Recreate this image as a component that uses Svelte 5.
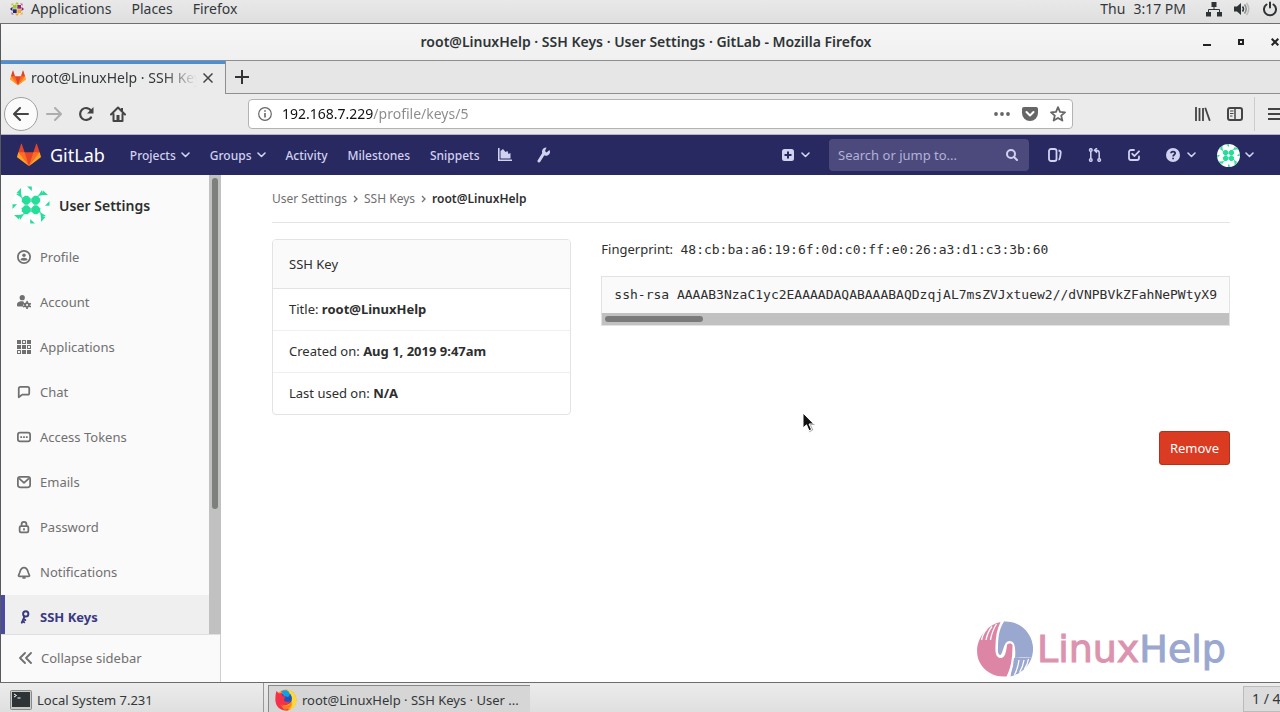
<script>
  const sideItems = [
    { label: 'Profile', icon: 'profile' },
    { label: 'Account', icon: 'account' },
    { label: 'Applications', icon: 'apps' },
    { label: 'Chat', icon: 'chat' },
    { label: 'Access Tokens', icon: 'token' },
    { label: 'Emails', icon: 'mail' },
    { label: 'Password', icon: 'lock' },
    { label: 'Notifications', icon: 'bell' },
    { label: 'SSH Keys', icon: 'key', active: true }
  ];
  const details = [
    ['Title:', 'root@LinuxHelp'],
    ['Created on:', 'Aug 1, 2019 9:47am'],
    ['Last used on:', 'N/A']
  ];
  const publicKey =
    'ssh-rsa AAAAB3NzaC1yc2EAAAADAQABAAABAQDzqjAL7msZVJxtuew2//dVNPBVkZFahNePWtyX9';
  let url = $state('192.168.7.229/profile/keys/5');
  let query = $state('');
</script>

{#snippet tanuki(size)}
  <svg width={size} height={size} viewBox="0 0 36 36" aria-hidden="true">
    <path fill="#e24329" d="M2 14l9.38 9v-9l-4-12.28c-.205-.632-1.176-.632-1.38 0z" />
    <path fill="#e24329" d="M34 14l-9.38 9v-9l4-12.28c.205-.632 1.176-.632 1.38 0z" />
    <path fill="#e24329" d="M18 34.38 3 14h30z" />
    <path fill="#fc6d26" d="M18 34.38 11.38 14H2l4 11z" />
    <path fill="#fc6d26" d="M18 34.38 24.62 14H34l-4 11z" />
    <path fill="#fca326" d="M2 14L.1 20.16c-.18.565 0 1.2.5 1.56L18 34.38z" />
    <path fill="#fca326" d="M34 14l1.9 6.16c.18.565 0 1.2-.5 1.56L18 34.38z" />
  </svg>
{/snippet}

{#snippet chevron()}
  <svg width="9" height="6" viewBox="0 0 9 6" aria-hidden="true">
    <path d="M1 1l3.500 3.500L8 1" fill="none" stroke="currentColor" stroke-width="1.600" stroke-linecap="round" stroke-linejoin="round" />
  </svg>
{/snippet}

{#snippet identicon(size)}
  <svg width={size} height={size} viewBox="0 0 38 38" aria-hidden="true">
    <circle cx="19" cy="19" r="19" fill="#fff" />
    {#each [0, 90, 180, 270] as turn}
      <g fill="#27dd9c" transform="rotate({turn} 19 19)">
        <path d="M12.800 9.800h3l3 3v3l-3 3h-3l-3-3v-3z" />
        <path d="M15 .5h4.800v4.500z" />
        <path d="M26 10l4-6 1.500 5z" />
        <path d="M31 4.500l5 4.500h-5z" />
        <path d="M26.500 8.500v4l-3.500 1z" />
      </g>
    {/each}
  </svg>
{/snippet}

{#snippet sideIcon(name)}
  <svg width="14" height="14" viewBox="0 0 16 16" fill="none" stroke="currentColor" stroke-width="2" stroke-linejoin="round" stroke-linecap="round" aria-hidden="true">
    {#if name === 'profile'}
      <circle cx="8" cy="8" r="7" />
      <circle cx="8" cy="6" r="2" fill="currentColor" stroke="none" />
      <path d="M4 11.500c0-3.500 8-3.500 8 0-1 1-7 1-8 0z" fill="currentColor" stroke="none" />
    {:else if name === 'account'}
      <g fill="currentColor" stroke="none">
        <circle cx="6" cy="3" r="3" />
        <path d="M1 13c-1 0-1-1-1-2 0-3 3-4 5-4 1.500 0 2.500.3 3.300 1-1.500 1.500-1.700 3-1 5z" />
      </g>
      <circle cx="11.500" cy="11.500" r="2.200" />
      <path d="M11.500 7.600v.8M11.500 14.600v.8M7.800 10l.8.400M14.400 12.800l.8.400M7.800 13.200l.8-.4M14.400 10.400l.8-.4" />
    {:else if name === 'apps'}
      <g fill="currentColor" stroke="none">
        <path d="M0 0h4.600v4.600H0zM11.400 0H16v4.600h-4.600zM0 5.700h4.600v4.600H0zM5.700 5.700h4.600v4.600H5.700zM5.700 11.400h4.600V16H5.700zM11.400 11.400H16V16h-4.600z" />
      </g>
      <path d="M6.300.600h3.400v3.400H6.300zM12 6.300h3.400v3.400H12zM.600 12H4v3.400H.600z" stroke-width="1.200" />
    {:else if name === 'chat'}
      <path d="M4 2h8a2 2 0 0 1 2 2v5a2 2 0 0 1-2 2H6l-4 3V4a2 2 0 0 1 2-2z" />
    {:else if name === 'token'}
      <rect x="1" y="3" width="14" height="10" rx="2.500" />
      <path d="M3.800 7h2v2h-2zM7 7h2v2H7zM10.200 7h2v2h-2z" fill="currentColor" stroke="none" />
    {:else if name === 'mail'}
      <rect x="1" y="2" width="14" height="12" rx="2.500" />
      <path d="M3 4.500l5 4.500 5-4.500" />
    {:else if name === 'lock'}
      <rect x="3" y="7" width="10" height="7" rx="1.500" />
      <path d="M5.200 7V5a2.800 2.800 0 0 1 5.600 0v2M8 10v1" />
    {:else if name === 'bell'}
      <path d="M3 13c-1.300 0-1.500-1-.9-2C4 8.500 3 3 8 3s4 5.500 5.900 8c.6 1 .4 2-.9 2z" />
      <path d="M7 14.800h2" />
    {:else if name === 'key'}
      <circle cx="10" cy="4.500" r="3" stroke-width="2.200" />
      <path d="M8.500 7.500L5.500 14.500M7.500 10.500l2 1M6.300 13l2 1" stroke-width="2.200" />
    {/if}
  </svg>
{/snippet}

<div class="desktop">
  <header class="panel">
    <svg class="centos" width="14" height="14" viewBox="0 0 14 14" aria-hidden="true">
      <path d="M3 3h4v4H3z" fill="#9ccd2a" />
      <path d="M7 3h4v4H7z" fill="#932279" />
      <path d="M3 7h4v4H3z" fill="#262577" />
      <path d="M7 7h4v4H7z" fill="#efa724" />
      <path d="M7 0l2.200 2.500H4.800z" fill="#9ccd2a" />
      <path d="M14 7l-2.500 2.200V4.800z" fill="#932279" />
      <path d="M7 14l-2.200-2.500h4.400z" fill="#efa724" />
      <path d="M0 7l2.500-2.200v4.400z" fill="#262577" />
      <path d="M1.500 1.500H4L1.500 4zM12.500 12.500H10l2.500-2.500z" fill="#efa724" />
      <path d="M12.500 1.500V4L10 1.500zM1.500 12.500V10L4 12.500z" fill="#b45ba0" />
      <path d="M7 2.500v9M2.500 7h9" stroke="#eee" stroke-width=".6" />
    </svg>
    <nav class="menus">
      <button>Applications</button>
      <button>Places</button>
      <button>Firefox</button>
    </nav>
    <div class="tray">
      <time><span>Thu</span><span>3:17 PM</span></time>
      <svg width="16" height="16" viewBox="0 0 16 16" fill="#2e3436" aria-hidden="true">
        <path d="M5.500 1h5v5h-5zM0 11h5v4.500H0zM11 11h5v4.500h-5z" />
        <path d="M8 5v3.500M2.500 11V8.500h11V11" fill="none" stroke="#2e3436" />
      </svg>
      <svg width="16" height="16" viewBox="0 0 16 16" aria-hidden="true">
        <path d="M0 5.500h3L7 2v12l-4-3.500H0z" fill="#2e3436" />
        <path d="M8.500 5.500q2 2.500 0 5" fill="none" stroke="#2e3436" stroke-width="1.500" />
        <path d="M10.500 3.500q3.500 4.500 0 9" fill="none" stroke="#888" stroke-width="1.500" />
        <path d="M12.500 2q4.500 6 0 12" fill="none" stroke="#bbb" stroke-width="1.500" />
      </svg>
      <svg width="16" height="16" viewBox="0 0 16 16" fill="none" stroke="#2e3436" stroke-width="2" stroke-linecap="round" aria-hidden="true">
        <path d="M4.500 3.500a6 6 0 1 0 7 0M8 1.500v5" />
      </svg>
    </div>
  </header>

  <section class="window">
    <div class="titlebar">
      <h1>root@LinuxHelp · SSH Keys · User Settings · GitLab - Mozilla Firefox</h1>
      <div class="controls">
        <button aria-label="Minimize"><svg width="8" height="8" viewBox="0 0 8 8"><path d="M0 6h8v2H0z" fill="#222" /></svg></button>
        <button aria-label="Maximize"><svg width="8" height="8" viewBox="0 0 8 8"><path d="M2 2h4v4H2z" fill="none" stroke="#222" stroke-width="2" /></svg></button>
        <button aria-label="Close"><svg width="8" height="8" viewBox="0 0 8 8"><path d="M.7.7l6.600 6.600M7.300.7L.7 7.300" stroke="#222" stroke-width="2" /></svg></button>
      </div>
    </div>

    <div class="tabs">
      <div class="tab">
        {@render tanuki(16)}
        <span class="tab-title">root@LinuxHelp · SSH Keys</span>
        <button aria-label="Close tab"><svg width="10" height="10" viewBox="0 0 10 10"><path d="M.5.5l9 9M9.500.5l-9 9" stroke="#444" stroke-width="1.500" /></svg></button>
      </div>
      <div class="tab-rest">
        <button aria-label="New tab"><svg width="14" height="14" viewBox="0 0 14 14"><path d="M7 0v14M0 7h14" stroke="#333" stroke-width="2" /></svg></button>
      </div>
    </div>

    <div class="toolbar">
      <button class="back" aria-label="Back"><svg width="16" height="14" viewBox="0 0 16 14"><path d="M15 7H1.500M7 1L1 7l6 6" fill="none" stroke="#444" stroke-width="2" stroke-linecap="round" stroke-linejoin="round" /></svg></button>
      <button aria-label="Forward"><svg width="16" height="14" viewBox="0 0 16 14"><path d="M1 7h13.500M9 1l6 6-6 6" fill="none" stroke="#adadad" stroke-width="2" stroke-linecap="round" stroke-linejoin="round" /></svg></button>
      <button aria-label="Reload"><svg width="16" height="16" viewBox="0 0 16 16"><path d="M13 11.500A6 6 0 1 1 13 4.500" fill="none" stroke="#444" stroke-width="2.200" stroke-linecap="round" /><path d="M15.500 1v6.500H9z" fill="#444" /></svg></button>
      <button aria-label="Home"><svg width="16" height="16" viewBox="0 0 16 16"><path d="M1 8.500L8 1.500l7 7M3.500 8v7h9V8" fill="none" stroke="#444" stroke-width="2" stroke-linecap="round" stroke-linejoin="round" /><path d="M6.500 9h3v6h-3zM11 2h2v4l-2-2z" fill="#444" /></svg></button>
      <div class="urlbar">
        <svg width="14" height="14" viewBox="0 0 14 14" fill="none" stroke="#666" aria-hidden="true"><circle cx="7" cy="7" r="6.300" stroke-width="1.200" /><path d="M7 6v4.500M7 3.300v1.500" stroke-width="1.600" /></svg>
        <input aria-label="Address" bind:value={url} />
        <svg width="16" height="16" viewBox="0 0 16 16" fill="#666" aria-hidden="true"><circle cx="2" cy="8" r="1.900" /><circle cx="8" cy="8" r="1.900" /><circle cx="14" cy="8" r="1.900" /></svg>
        <svg width="16" height="14" viewBox="0 0 16 14" aria-hidden="true"><path d="M2 0h12a2 2 0 0 1 2 2v4a8 8 0 0 1-16 0V2a2 2 0 0 1 2-2z" fill="#666" /><path d="M4.500 5L8 8.500 11.500 5" fill="none" stroke="#fff" stroke-width="2" stroke-linecap="round" stroke-linejoin="round" /></svg>
        <svg width="16" height="16" viewBox="0 0 16 16" aria-hidden="true"><path d="M8 1.200l2 4.600 5 .5-3.800 3.300 1.200 5L8 12l-4.400 2.600 1.200-5L1 6.300l5-.5z" fill="none" stroke="#666" stroke-width="1.800" stroke-linejoin="round" /></svg>
      </div>
      <div class="tools">
        <button aria-label="Library"><svg width="16" height="14" viewBox="0 0 16 14"><path d="M1 0v14M4.500 1v13M8 1v13M10.200.8l4.600 13" stroke="#444" stroke-width="1.800" fill="none" /></svg></button>
        <button aria-label="Sidebars"><svg width="16" height="14" viewBox="0 0 16 14" fill="none" stroke="#444"><rect x="1" y="1" width="14" height="12" rx="2" stroke-width="2" /><path d="M8 1v12" stroke-width="1.500" /><path d="M3 4h3.500M3 6.500h3.500M3 9h2.500" /></svg></button>
        <button class="burger" aria-label="Open menu"><svg width="16" height="12" viewBox="0 0 16 12"><path d="M0 1h16M0 6h16M0 11h16" stroke="#444" stroke-width="2" /></svg></button>
      </div>
    </div>

    <div class="page">
      <header class="navbar">
        <a class="brand" href="#home">{@render tanuki(24)}<span>GitLab</span></a>
        <nav class="primary">
          <a href="#projects">Projects {@render chevron()}</a>
          <a href="#groups">Groups {@render chevron()}</a>
          <a href="#activity">Activity</a>
          <a href="#milestones">Milestones</a>
          <a href="#snippets">Snippets</a>
        </nav>
        <div class="shortcuts">
          <a href="#charts" aria-label="Instance statistics"><svg width="14" height="14" viewBox="0 0 14 14" fill="currentColor"><path d="M0 0h1.600v11.400H14V13H0z" /><path d="M2.500 10.500V3L5 1l2.500 3L9.500 3 10.500 6l2-1v5.500z" /></svg></a>
          <a href="#admin" aria-label="Admin area"><svg width="13" height="16" viewBox="0 0 13 16"><path d="M2 14l5-8" stroke="currentColor" stroke-width="3" stroke-linecap="round" /><path d="M9.500.5A4.200 4.200 0 0 0 5 4.500a4 4 0 0 0 5.500 4A4.200 4.200 0 0 0 12.500 3L9.500 5.500 8 4z" fill="currentColor" /></svg></a>
        </div>
        <div class="user-nav">
          <button aria-label="New"><svg width="12" height="12" viewBox="0 0 12 12"><rect width="12" height="12" rx="2.500" fill="currentColor" /><path d="M6 2.500v7M2.500 6h7" stroke="#292961" stroke-width="2" /></svg>{@render chevron()}</button>
          <div class="search">
            <input aria-label="Search" placeholder="Search or jump to..." bind:value={query} />
            <svg width="12" height="12" viewBox="0 0 12 12" fill="none" stroke="currentColor" stroke-width="2" stroke-linecap="round" aria-hidden="true"><circle cx="5" cy="5" r="4" /><path d="M8 8l3 3" /></svg>
          </div>
          <div class="counters">
            <a href="#issues" aria-label="Issues"><svg width="14" height="14" viewBox="0 0 14 14" fill="none" stroke="currentColor" stroke-width="1.800"><rect x="1" y="1" width="7.500" height="12" rx="2" /><path d="M10.500 2.500c2.500.3 2.500 1.500 2 4l-.5 3c-.3 1.500-.8 2-1.500 2" /></svg></a>
            <a href="#merge" aria-label="Merge requests"><svg width="14" height="14" viewBox="0 0 14 14" fill="none" stroke="currentColor" stroke-width="1.500"><circle cx="2.800" cy="12" r="1.300" /><circle cx="11.200" cy="12" r="1.300" /><circle cx="2.800" cy="2" r="1.300" /><path d="M2.800 3.300v7.400M11.200 10.700V5c0-2-.8-2.700-4-2.700M9 0L6.500 2.300 9 4.600" /></svg></a>
            <a href="#todos" aria-label="To-dos"><svg width="12" height="12" viewBox="0 0 12 12" fill="none" stroke="currentColor" stroke-width="1.800" stroke-linecap="round" stroke-linejoin="round"><path d="M6 1H3a2 2 0 0 0-2 2v6a2 2 0 0 0 2 2h6a2 2 0 0 0 2-2V7.500M4.200 4.800L6.500 7 11 2.300" /></svg></a>
          </div>
          <button aria-label="Help"><svg width="14" height="14" viewBox="0 0 14 14"><circle cx="7" cy="7" r="7" fill="currentColor" /><path d="M5 5.300C5 3 9.200 3 9.200 5.300 9.200 6.800 7.100 6.800 7.100 8.500M7.100 9.700v1.600" fill="none" stroke="#292961" stroke-width="1.700" /></svg>{@render chevron()}</button>
          <button class="avatar" aria-label="Account menu">{@render identicon(23)}{@render chevron()}</button>
        </div>
      </header>

      <div class="body">
        <aside class="sidebar">
          <div class="side-scroll">
            <div class="side-list">
              <a class="side-title" href="#settings">{@render identicon(38)}<span>User Settings</span></a>
              <ul>
                {#each sideItems as item}
                  <li class:active={item.active}>
                    <a href="#{item.icon}">{@render sideIcon(item.icon)}<span>{item.label}</span></a>
                  </li>
                {/each}
              </ul>
            </div>
            <div class="vbar"><div class="vthumb"></div></div>
          </div>
          <button class="collapse">
            <svg width="13" height="12" viewBox="0 0 13 12" fill="none" stroke="currentColor" stroke-width="1.800" stroke-linecap="round" stroke-linejoin="round" aria-hidden="true"><path d="M6 1L1 6l5 5M12 1L7 6l5 5" /></svg>
            Collapse sidebar
          </button>
        </aside>

        <main>
          <nav class="crumbs" aria-label="Breadcrumb">
            <a href="#user">User Settings</a>
            <svg width="5" height="8" viewBox="0 0 5 8"><path d="M1 1l3 3-3 3" fill="none" stroke="#707070" stroke-width="1.300" /></svg>
            <a href="#keys">SSH Keys</a>
            <svg width="5" height="8" viewBox="0 0 5 8"><path d="M1 1l3 3-3 3" fill="none" stroke="#707070" stroke-width="1.300" /></svg>
            <strong>root@LinuxHelp</strong>
          </nav>
          <div class="columns">
            <section class="card">
              <h2>SSH Key</h2>
              <ul>
                {#each details as [name, value]}
                  <li>{name} <strong>{value}</strong></li>
                {/each}
              </ul>
            </section>
            <section class="key">
              <p>Fingerprint: <code>48:cb:ba:a6:19:6f:0d:c0:ff:e0:26:a3:d1:c3:3b:60</code></p>
              <div class="keybox">
                <pre>{publicKey}</pre>
                <div class="hbar"><div class="hthumb"></div></div>
              </div>
              <button class="remove">Remove</button>
            </section>
          </div>
        </main>
      </div>
    </div>
  </section>

  <footer class="taskbar">
    <button class="task">
      <svg width="22" height="20" viewBox="0 0 22 20" aria-hidden="true">
        <rect x=".5" y=".5" width="21" height="19" rx="1" fill="#c8cac8" stroke="#888a85" />
        <path d="M2 2h18v15H2z" fill="#2e3436" />
        <path d="M4 4l2.500 1.500L4 7M7.500 8h3" fill="none" stroke="#fff" />
      </svg>
      Local System 7.231
    </button>
    <button class="task current">
      <svg width="22" height="22" viewBox="0 0 22 22" aria-hidden="true">
        <circle cx="11" cy="11" r="10.500" fill="#ff9a1f" />
        <path d="M12 .6A10.500 10.500 0 0 1 21.500 11c0 5-3 8.500-7 10 3-4 3-7 2-10-1-4-4-5-4.500-10.400z" fill="#ffd83b" />
        <circle cx="11" cy="9.500" r="6" fill="#1c56b8" />
        <path d="M6 2.500c3-2 7-1.500 8 .5 1.500 2.500.5 4-1 5L9 7z" fill="#159ee8" />
        <path d="M1.500 2L4 4.500 7 4l.5 3 3 .8-1.500 2.700c0 2.500 3.500 3 6 1.500-1 4-5 5-8 3.500l7 5.500C8 23 1 19 .5 12 .3 8 .5 5 1.500 2z" fill="#f5304b" />
        <path d="M5 15c4 4 10 2.500 11-2 .5 5-3 8-7 7.500z" fill="#ff7a1c" />
      </svg>
      root@LinuxHelp · SSH Keys · User ...
    </button>
    <div class="workspace">1 / 4</div>
  </footer>

  <svg class="cursor" width="14" height="21" viewBox="0 0 14 21" aria-hidden="true">
    <path d="M1 1v15l3.500-3.200 2.500 6 2.600-1.200L7 12h4.800z" fill="#111" stroke="#fff" />
    <path d="M12.500 12.500H8.300l2.500 5.500L7 20" fill="none" stroke="#999" stroke-width=".8" />
  </svg>

  <div class="watermark">
    <svg width="56" height="56" viewBox="0 0 56 56" aria-hidden="true">
      <path d="M27 .5A27.500 27.500 0 0 1 54.500 37c-2-.5-8-.8-16.500 0 1-11-.5-17-5.500-17-6 0-6 12-9 14-2 0-3-2-2.500-7C21 17 22 8 27 .5z" fill="#9aa7cf" />
      <path d="M23.500 1C6 5-5 25 2.500 41c5 10 16 15.500 27 14.500C34 47 35.500 37 35.500 24c-1-2-4.500-2-5.500 0-1 8-2 12-5.500 13-5 0-6.500-4-6-12C18.500 16 20 8 23.500 1z" fill="#dc85a5" />
      <path d="M36 37h18.500c-3 9-11 16-21 18.500z" fill="#9aa7cf" />
      <path d="M4.500 19q1.500-7 5.500-11M9 19q1.500-8 6-13.500M13.500 19q1.500-9 6-16M51.500 38q-1 6-4 10M47 39q-1 7-4.500 12.500M42 39q-1 8-4.500 15M36.500 36q-.5 10-4.500 20" stroke="#fff" stroke-width="1.300" fill="none" />
    </svg>
    <span><b>Linux</b><i>Help</i></span>
  </div>
</div>

<style>
  :global(body) { margin: 0; }
  .desktop {
    position: relative;
    display: flex;
    flex-direction: column;
    height: 100vh;
    overflow: hidden;
    background: #fff;
    color: #2e2e2e;
    font-family: "Noto Sans", sans-serif;
    font-size: 13px;
  }
  .desktop * { box-sizing: border-box; }
  svg { display: block; flex: none; }
  button {
    display: flex;
    align-items: center;
    padding: 0;
    border: 0;
    background: none;
    color: inherit;
    font: inherit;
    white-space: nowrap;
  }
  a { color: inherit; text-decoration: none; }
  input { border: 0; outline: 0; padding: 0; min-width: 0; font: inherit; }
  ul { list-style: none; margin: 0; padding: 0; }

  .panel {
    display: flex;
    align-items: center;
    flex: none;
    height: 24px;
    padding: 0 2px 5px 10px;
    background: linear-gradient(#e9e9e9, #dedede);
    border-bottom: 1px solid #6f6f6f;
    font-size: 14px;
    line-height: 18px;
    color: #33383a;
  }
  .menus { display: flex; gap: 20px; margin-left: 7px; }
  .tray { display: flex; align-items: center; gap: 12px; margin-left: auto; }
  time { display: flex; gap: 8px; margin-right: 8px; }

  .window { flex: 1; min-height: 0; display: flex; flex-direction: column; border-left: 1px solid #58595c; }
  .titlebar {
    display: flex;
    align-items: center;
    flex: none;
    height: 37px;
    background: linear-gradient(#f6f6f6, #f0f0f0);
    border-bottom: 1px solid #8e8e8e;
  }
  h1 { flex: 1; margin: 0 -76px 0 12px; padding-bottom: 2px; text-align: center; font-size: 14px; font-weight: 600; color: #2e3436; }
  .controls { display: flex; gap: 26px; margin-right: 1px; }

  .tabs { display: flex; flex: none; height: 33px; }
  .tab {
    display: flex;
    align-items: center;
    width: 224px;
    padding: 0 12px 3px 9px;
    border-top: 3px solid #4a90d9;
    background: #ebebeb;
    font-size: 14px;
    color: #33383a;
  }
  .tab-title {
    flex: 1;
    margin: 0 6px 0 5px;
    overflow: hidden;
    white-space: nowrap;
    mask-image: linear-gradient(90deg, #000 80%, transparent);
  }
  .tab-rest {
    display: flex;
    align-items: center;
    flex: 1;
    padding-left: 9px;
    background: #e6e6e6;
    border-left: 1px solid #8e8e8e;
    border-bottom: 1px solid #8e8e8e;
  }

  .toolbar {
    display: flex;
    align-items: center;
    flex: none;
    height: 41px;
    padding-left: 3px;
    gap: 16px;
    background: #ebebeb;
    border-bottom: 1px solid #b4b1cc;
  }
  .back {
    justify-content: center;
    width: 34px;
    height: 34px;
    margin-right: -8px;
    border: 1px solid #a0a0a0;
    border-radius: 50%;
    background: #fbfbfb;
  }
  .urlbar {
    display: flex;
    align-items: center;
    flex: 1;
    gap: 12px;
    height: 30px;
    margin: 0 106px;
    padding: 0 6px 0 9px;
    border: 1px solid #b3b3b3;
    border-radius: 4px;
    background: #fff;
    font-size: 14px;
  }
  .urlbar input {
    flex: 1;
    margin-left: -2px;
    padding-bottom: 2px;
    background: linear-gradient(90deg, #111 91px, #8a8a8a 91px) text;
    -webkit-text-fill-color: transparent;
  }
  .tools { display: flex; align-items: center; gap: 16px; margin-right: -4px; }
  .burger { height: 34px; margin-left: -5px; padding-left: 13px; border-left: 1px solid #ccc; }

  .page { flex: 1; min-height: 0; display: flex; flex-direction: column; background: #fff; }
  .navbar {
    display: flex;
    align-items: center;
    flex: none;
    height: 40px;
    padding: 0 26px 0 16px;
    background: #292961;
    color: #d1d1f0;
    font-size: 12px;
    font-weight: 500;
  }
  .brand { display: flex; align-items: center; gap: 9px; color: #fff; font-size: 18px; font-weight: 400; }
  .brand span { padding-bottom: 1px; }
  .primary { display: flex; gap: 20px; margin-left: 25px; }
  .primary a { display: flex; align-items: center; gap: 5px; }
  .shortcuts { display: flex; align-items: center; gap: 25px; margin-left: 18px; }
  .user-nav { display: flex; align-items: center; gap: 26px; margin-left: auto; }
  .user-nav button { gap: 7px; }
  .user-nav > button:first-child { margin-right: -7px; }
  .search {
    display: flex;
    align-items: center;
    width: 200px;
    height: 32px;
    margin-right: -7px;
    padding: 0 11px 0 9px;
    border-radius: 4px;
    background: #4c4a7c;
    font-size: 13px;
    font-weight: 400;
  }
  .search input { flex: 1; background: none; color: #fff; }
  .search input::placeholder { color: #b2b2d8; opacity: 1; }
  .counters { display: flex; align-items: center; gap: 26px; }
  .user-nav .avatar { gap: 5px; margin-left: -5px; }

  .body { flex: 1; min-height: 0; display: flex; }
  .sidebar { display: flex; flex-direction: column; flex: none; width: 220px; background: #fafafa; border-right: 1px solid #d0d0d0; color: #707070; }
  .side-scroll { flex: 1; min-height: 0; display: flex; margin-right: -1px; }
  .side-list { flex: 1; overflow: hidden; }
  .side-title { display: flex; align-items: center; gap: 9px; height: 60px; padding-left: 11px; font-size: 14px; font-weight: 600; color: #2e2e2e; }
  .side-list li a { display: flex; align-items: center; gap: 9px; height: 45px; padding: 0 0 2px 16px; }
  .side-list .active a { padding-left: 12px; border-left: 4px solid #4b4ba3; background: #efefef; color: #393982; font-weight: 700; }
  .vbar { width: 12px; padding: 3px; background: #c1c1c1; }
  .vthumb { height: 73%; border-radius: 4px; background: #7e807e; }
  .collapse { flex: none; height: 48px; padding: 0 0 2px 18px; gap: 9px; border-top: 1px solid #e0e0e0; }

  main { flex: 1; min-width: 0; padding: 0 50px 0 51px; }
  .crumbs { display: flex; align-items: center; gap: 6px; height: 48px; border-bottom: 1px solid #e3e3e3; font-size: 12px; color: #707070; }
  .columns { display: grid; grid-template-columns: minmax(0, 10fr) minmax(0, 21fr); gap: 30px; align-items: start; margin-top: 16px; }
  .card { border: 1px solid #e3e3e3; border-radius: 4px; overflow: hidden; }
  .card h2 { margin: 0; padding: 0 16px; line-height: 48px; font-size: 13px; font-weight: 400; background: #fafafa; border-bottom: 1px solid #e3e3e3; }
  .card li { padding: 0 16px; line-height: 41px; }
  .card li + li { border-top: 1px solid #efefef; }
  .card strong { font-weight: 700; }
  .crumbs strong { font-weight: 600; color: #2e2e2e; }
  .key { display: flex; flex-direction: column; }
  .key p { margin: 0 0 16px; line-height: 21px; }
  code, pre { font-family: "DejaVu Sans Mono", monospace; font-size: 13px; }
  code { margin-left: 4px; }
  .keybox { border: 1px solid #e3e3e3; background: #fafafa; }
  pre { margin: 0; padding: 8px 12px; line-height: 20px; overflow: hidden; }
  .hbar { height: 12px; padding: 3px; background: #c1c1c1; }
  .hthumb { width: 98px; height: 6px; border-radius: 3px; background: #7a7a7a; }
  .remove { align-self: flex-end; height: 34px; margin-top: 105px; padding: 0 10px; border: 1px solid #b3301a; border-radius: 3px; background: #db3b21; color: #fff; }

  .taskbar {
    display: flex;
    flex: none;
    height: 30px;
    border-top: 1px solid #6c6c6c;
    background: linear-gradient(#ececec, #dfdfdf);
    font-size: 13px;
    color: #33383a;
  }
  .task { gap: 5px; width: 264px; padding: 4px 0 0 10px; border-right: 1px solid #999; }
  .task.current { width: 262px; margin: 2px 0 0 4px; padding: 2px 0 0 6px; border: 1px solid #888; border-width: 1px 0 0 1px; background: #d6d6d6; }
  .workspace { margin: 3px -4px 0 auto; padding: 2px 0 0 8px; width: 41px; white-space: nowrap; border: 1px solid #bbb; background: #dcdcdc; font-size: 14px; }

  .cursor { position: absolute; left: 802px; top: 412px; }
  .watermark { position: absolute; right: 54px; bottom: 35px; display: flex; align-items: center; gap: 4px; font: 38px "DejaVu Sans", sans-serif; pointer-events: none; }
  .watermark span { display: flex; }
  .watermark b { font-weight: 400; color: #dc93af; -webkit-text-stroke: 1px #dc93af; }
  .watermark i { font-style: normal; color: #9aa7cf; -webkit-text-stroke: 1px #9aa7cf; }
</style>
